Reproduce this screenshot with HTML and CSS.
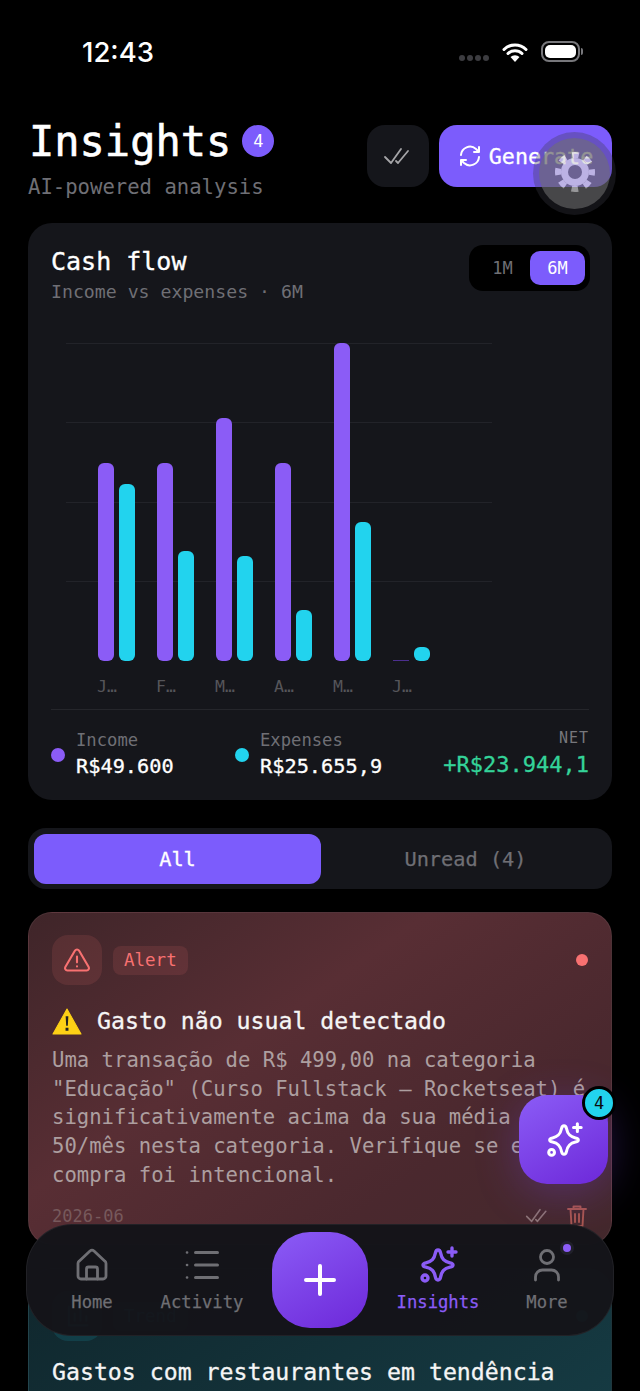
FILE: index.html
```html
<!DOCTYPE html>
<html lang="pt">
<head>
<meta charset="utf-8">
<title>Insights</title>
<link rel="stylesheet" href="styles.css">
</head>
<body>
<div class="app">
  <div class="status">
    <span class="time">12:43</span>
    <div class="status-right">
      <span class="cell"><i></i><i></i><i></i><i></i></span>
      <svg class="wifi" width="26" height="20" viewBox="0 0 26 20"><path d="M2 7.500a15.500 15.500 0 0 1 22 0M6 11.500a10 10 0 0 1 14 0" fill="none" stroke="#fff" stroke-width="3" stroke-linecap="round"/><path d="M13 20 8.500 15a6.500 6.500 0 0 1 9 0z" fill="#fff"/></svg>
      <span class="battery"><span class="battery-fill"></span></span>
    </div>
  </div>

  <main class="content">
    <header class="head">
      <div class="head-left">
        <div class="title-row"><h1>Insights</h1><span class="count">4</span></div>
        <p class="sub">AI-powered analysis</p>
      </div>
      <div class="head-actions">
        <button class="icon-btn">
          <svg width="30" height="20" viewBox="0 0 30 20" fill="none" stroke="#a5a5a8" stroke-width="1.800" stroke-linecap="round" stroke-linejoin="round"><path d="M2 11l6 6 10-14M13 15l2 2 10-12"/></svg>
        </button>
        <button class="gen-btn">
          <svg width="24" height="24" viewBox="0 0 24 24" fill="none" stroke="#fff" stroke-width="2" stroke-linecap="round" stroke-linejoin="round"><path d="M3 11a9 9 0 0 1 15-6l3 3M21 3v5h-5M21 13a9 9 0 0 1-15 6l-3-3M3 21v-5h5"/></svg>
          <span>Generate</span>
        </button>
      </div>
    </header>

    <section class="card flow">
      <div class="flow-head">
        <div>
          <h2>Cash flow</h2>
          <p class="flow-sub">Income vs expenses · 6M</p>
        </div>
        <div class="range"><span class="range-item">1M</span><span class="range-item on">6M</span></div>
      </div>
      <div class="chart">
        <div class="grid"><i></i><i></i><i></i><i></i></div>
        <div class="bars">
          <div class="group"><div class="pair"><b class="bar inc h198"></b><b class="bar exp h177"></b></div><span>J…</span></div>
          <div class="group"><div class="pair"><b class="bar inc h198"></b><b class="bar exp h110"></b></div><span>F…</span></div>
          <div class="group"><div class="pair"><b class="bar inc h243"></b><b class="bar exp h105"></b></div><span>M…</span></div>
          <div class="group"><div class="pair"><b class="bar inc h198"></b><b class="bar exp h51"></b></div><span>A…</span></div>
          <div class="group"><div class="pair"><b class="bar inc h318"></b><b class="bar exp h139"></b></div><span>M…</span></div>
          <div class="group"><div class="pair"><b class="bar zero"></b><b class="bar exp h14"></b></div><span>J…</span></div>
        </div>
      </div>
      <div class="legend">
        <div class="leg leg-inc"><span class="dot dot-inc"></span><div><p class="leg-label">Income</p><p class="leg-val">R$49.600</p></div></div>
        <div class="leg leg-exp"><span class="dot dot-exp"></span><div><p class="leg-label">Expenses</p><p class="leg-val">R$25.655,9</p></div></div>
        <div class="net"><p class="net-label">NET</p><p class="net-val">+R$23.944,1</p></div>
      </div>
    </section>

    <div class="tabs">
      <button class="tab on">All</button>
      <button class="tab">Unread (4)</button>
    </div>

    <article class="card insight alert">
      <div class="ins-top">
        <span class="ins-icon">
          <svg width="28" height="28" viewBox="0 0 24 24" fill="none" stroke="#f87171" stroke-width="1.800" stroke-linecap="round" stroke-linejoin="round"><path d="M10.300 3.900 2 18a2 2 0 0 0 1.700 3h16.600a2 2 0 0 0 1.700-3L13.700 3.900a2 2 0 0 0-3.400 0zM12 9v5M12 17.500v.1"/></svg>
        </span>
        <span class="tag">Alert</span>
        <span class="unread"></span>
      </div>
      <h3><svg class="warn" width="30" height="27" viewBox="0 0 28 26"><path d="M14 1 27.500 25H.5z" fill="#fdd116" stroke="#fdd116" stroke-width="1" stroke-linejoin="round"/><path d="M12.700 8h2.600l-.5 9h-1.600zM12.600 19h2.800v3h-2.800z" fill="#222"/></svg>Gasto não usual detectado</h3>
      <p class="ins-body">Uma transação de R$ 499,00 na categoria<br>"Educação" (Curso Fullstack — Rocketseat) é<br>significativamente acima da sua média de R$<br>50/mês nesta categoria. Verifique se essa<br>compra foi intencional.</p>
      <div class="ins-foot">
        <span class="date">2026-06</span>
        <span class="foot-icons">
          <svg class="foot-check" width="25" height="17" viewBox="0 0 30 20" fill="none" stroke="#8d7476" stroke-width="1.900" stroke-linecap="round" stroke-linejoin="round"><path d="M2 11l6 6 10-14M13 15l2 2 10-12"/></svg>
          <svg class="foot-trash" width="22" height="24" viewBox="0 0 22 24" fill="none" stroke="#a8564f" stroke-width="1.900" stroke-linecap="round" stroke-linejoin="round"><path d="M2 5h18M7.500 5V2.500h7V5M4.500 5l1 17h11l1-17M9 10v8M13 10v8"/></svg>
        </span>
      </div>
    </article>

    <article class="card insight trend">
      <div class="ins-top">
        <span class="ins-icon trend-icon">
          <svg width="28" height="28" viewBox="0 0 24 24" fill="none" stroke="#22d3ee" stroke-width="1.800" stroke-linecap="round"><path d="M5 4v16h16M10 16v-6M15 16V7M20 16v-4"/></svg>
        </span>
        <span class="tag tag-trend">Trend</span>
        <span class="unread unread-trend"></span>
      </div>
      <h3 class="trend-title">Gastos com restaurantes em tendência</h3>
    </article>
  </main>

  <div class="gear">
    <div class="gear-disc">
      <svg width="42" height="42" viewBox="0 0 42 42" fill="none"><circle cx="21" cy="21" r="17" stroke="#fff" stroke-width="6" stroke-dasharray="6.700 6.650" stroke-dashoffset="3.350"/><circle cx="21" cy="21" r="14" fill="#fff"/><circle cx="21" cy="21" r="7" fill="#707070"/></svg>
    </div>
  </div>

  <div class="fab">
    <svg width="42" height="42" viewBox="-2 -2 44 44" fill="none" stroke="#fff" stroke-width="3.200" stroke-linecap="round" stroke-linejoin="round"><path d="M20 5c1.500 0 2.200 1 2.600 3 1.200 6 3.500 8.500 9.400 9.800 2 .4 3 1 3 2.200s-1 1.800-3 2.200c-5.900 1.300-8.200 3.800-9.400 9.800-.4 2-1.100 3-2.600 3s-2.200-1-2.600-3c-1.200-6-3.500-8.500-9.400-9.800-2-.4-3-1-3-2.200s1-1.800 3-2.200c5.900-1.300 8.200-3.800 9.400-9.800.4-2 1.100-3 2.600-3zM34 3v8M30 7h8"/><circle cx="7" cy="33" r="3"/></svg>
    <span class="fab-badge">4</span>
  </div>

  <nav class="nav">
    <a class="nav-item n-home">
      <svg width="36" height="36" viewBox="0 0 36 36" fill="none" stroke="#6f6f74" stroke-width="2.800" stroke-linecap="round" stroke-linejoin="round"><path d="M4 16.500a3 3 0 0 1 1.100-2.300L16 4a3 3 0 0 1 4 0l10.900 10.200a3 3 0 0 1 1.100 2.300V29a3 3 0 0 1-3 3H7a3 3 0 0 1-3-3z"/><path d="M12.500 32V22a2 2 0 0 1 2-2h7a2 2 0 0 1 2 2v10"/></svg>
      <span>Home</span>
    </a>
    <a class="nav-item n-act">
      <svg width="36" height="36" viewBox="0 0 36 36" fill="none" stroke="#6f6f74" stroke-width="3" stroke-linecap="round"><path d="M11.500 5.500h22M11.500 18h22M11.500 30.500h22"/><path d="M3 5.500h.1M3 18h.1M3 30.500h.1" stroke-width="2.600"/></svg>
      <span>Activity</span>
    </a>
    <button class="add" aria-label="Add">
      <svg width="32" height="32" viewBox="0 0 32 32" stroke="#fff" stroke-width="4" stroke-linecap="round"><path d="M16 2v28M2 16h28"/></svg>
    </button>
    <a class="nav-item n-ins on">
      <svg class="star" width="44" height="44" viewBox="-2 -2 44 44" fill="none" stroke="#8b5cf6" stroke-width="3.400" stroke-linecap="round" stroke-linejoin="round"><path d="M20 5c1.500 0 2.200 1 2.600 3 1.200 6 3.500 8.500 9.400 9.800 2 .4 3 1 3 2.200s-1 1.800-3 2.200c-5.900 1.300-8.200 3.800-9.400 9.800-.4 2-1.100 3-2.600 3s-2.200-1-2.600-3c-1.200-6-3.500-8.500-9.400-9.800-2-.4-3-1-3-2.200s1-1.800 3-2.200c5.900-1.300 8.200-3.800 9.400-9.800.4-2 1.100-3 2.600-3zM34 3v8M30 7h8"/><circle cx="7" cy="33" r="3"/></svg>
      <span>Insights</span>
    </a>
    <a class="nav-item n-more">
      <svg width="36" height="36" viewBox="0 0 36 36" fill="none" stroke="#6f6f74" stroke-width="2.800" stroke-linecap="round"><circle cx="18" cy="10" r="6.500"/><path d="M6.500 33v-3a7 7 0 0 1 7-7h9a7 7 0 0 1 7 7v3"/></svg>
      <span>More</span>
      <i class="more-dot"></i>
    </a>
  </nav>
</div>
</body>
</html>
```

FILE: styles.css
```css
* { box-sizing: border-box; margin: 0; padding: 0; }
html, body { width: 640px; height: 1391px; overflow: hidden; background: #000; }
body { font-family: "DejaVu Sans Mono", "Liberation Mono", monospace; color: #fff; }
button { font: inherit; color: inherit; border: 0; background: none; }
h1, h2, h3 { font-weight: 500; }
i, b { display: block; font-style: normal; }

.app { position: relative; width: 640px; height: 1391px; overflow: hidden; background: #000; }

.status { height: 100px; padding: 36px 60px 0 82px; display: flex; justify-content: space-between; align-items: flex-start; }
.time { font-family: Inter, "Noto Sans", sans-serif; font-weight: 500; font-size: 27.500px; line-height: 32px; }
.status-right { display: flex; align-items: center; gap: 13px; padding-top: 5px; }
.cell { display: flex; gap: 2px; margin-top: 12px; }
.cell i { width: 6px; height: 6px; border-radius: 50%; background: #3c3c40; }
.wifi { display: block; }
.battery { width: 39px; height: 21px; border: 2px solid #77777b; border-radius: 8px; padding: 2px; position: relative; }
.battery::after { content: ""; position: absolute; right: -5px; top: 5px; width: 2px; height: 7px; background: #77777b; border-radius: 0 2px 2px 0; }
.battery-fill { display: block; width: 100%; height: 100%; background: #fff; border-radius: 5px; }

.content { padding: 0 28px; display: flex; flex-direction: column; }

.head { display: flex; justify-content: space-between; height: 123px; flex: none; }
.title-row { display: flex; align-items: center; gap: 11px; height: 34px; margin-top: 25px; padding-left: 1px; }
h1 { font-size: 42px; line-height: 34px; -webkit-text-stroke: .6px #fff; }
.count { width: 32px; height: 32px; margin-top: -2px; border-radius: 50%; background: #7c5cfc; font-size: 17px; line-height: 32px; text-align: center; }
.sub { margin-top: 15px; font-size: 20.600px; line-height: 26px; color: #6f6f75; }
.head-actions { display: flex; gap: 10px; margin-top: 25px; height: 62px; }
.icon-btn { width: 62px; height: 62px; background: #15161b; border-radius: 18px; display: flex; align-items: center; justify-content: center; }
.gen-btn { width: 173px; height: 62px; background: #7c5cfc; border-radius: 18px; display: flex; align-items: center; justify-content: center; gap: 7px; font-size: 21.700px; font-weight: 500; -webkit-text-stroke: .3px #fff; }

.card { border-radius: 24px; }
.flow { height: 577px; flex: none; background: #15161b; padding: 23px; margin-bottom: 28px; display: flex; flex-direction: column; }
.flow-head { display: flex; justify-content: space-between; align-items: flex-start; height: 73px; flex: none; }
h2 { font-size: 25px; line-height: 32px; -webkit-text-stroke: .35px #fff; }
.flow-sub { font-size: 18.200px; line-height: 28px; color: #6f6f75; margin-top: 0; }
.range { width: 121px; height: 46px; background: #000; border-radius: 14px; padding: 6px 5px 6px 6px; display: flex; margin: -1px -1px 0 0; }
.range-item { flex: 1; font-size: 17px; line-height: 34px; text-align: center; color: #6f6f75; border-radius: 10px; }
.range-item.on { flex: none; width: 55px; background: #7c5cfc; color: #fff; }

.chart { position: relative; height: 390px; flex: none; }
.grid { position: absolute; left: 15px; top: 24px; width: 426px; height: 239px; display: flex; flex-direction: column; justify-content: space-between; }
.grid i { height: 1px; background: #222329; }
.bars { position: absolute; left: 47px; top: 0; display: flex; gap: 23px; }
.group { width: 36px; display: flex; flex-direction: column; align-items: flex-start; }
.pair { height: 342px; display: flex; gap: 5px; align-items: flex-end; }
.bar { width: 16px; border-radius: 6px; }
.inc { background: #8b5cf6; }
.exp { background: #22d3ee; }
.zero { height: 1px; background: #4c2f8f; border-radius: 0; }
.h198 { height: 198px; } .h177 { height: 177px; } .h110 { height: 110px; } .h243 { height: 243px; }
.h105 { height: 105px; } .h51 { height: 51px; } .h318 { height: 318px; } .h139 { height: 139px; } .h14 { height: 14px; }
.group span { margin: 16px 0 0 -1px; font-size: 16.500px; line-height: 20px; color: #55555a; white-space: nowrap; }

.legend { border-top: 1px solid #25262b; padding-top: 18px; display: flex; position: relative; flex: none; }
.leg { display: flex; align-items: center; gap: 11px; }
.leg-inc { width: 184px; }
.leg-exp { width: 183px; }
.dot { width: 14px; height: 14px; border-radius: 50%; }
.dot-inc { background: #8b5cf6; }
.dot-exp { background: #22d3ee; }
.leg-label { font-size: 17.200px; line-height: 22px; color: #6f6f75; }
.leg-val { font-size: 20.300px; line-height: 30px; font-weight: 500; -webkit-text-stroke: .3px #fff; }
.net { margin-left: auto; text-align: right; }
.net-label { font-size: 15px; line-height: 20px; color: #77777c; letter-spacing: 1px; }
.net-val { font-size: 22px; line-height: 34px; color: #34d399; font-weight: 500; -webkit-text-stroke: .3px #34d399; }

.tabs { height: 61px; flex: none; background: #15161b; border-radius: 18px; padding: 6px; display: flex; margin-bottom: 23px; }
.tab { flex: 1; height: 50px; font-size: 20.300px; color: #6f6f75; border-radius: 12px; font-weight: 500; -webkit-text-stroke: .25px #6f6f75; }
.tab.on { flex: none; width: 287px; background: #7c5cfc; color: #fff; -webkit-text-stroke: .3px #fff; }
.tab:last-child { padding-left: 4px; }

.insight { border: 1px solid rgba(255,255,255,.06); padding: 22px 23px; flex: none; }
.alert { height: 333px; margin-bottom: 23px; background: linear-gradient(145deg, #3f2529 0%, #582e34 38%, #4a282e 72%, #43282c 100%); }
.trend { height: 300px; background: linear-gradient(145deg, #10272d 0%, #174049 100%); }
.ins-top { display: flex; align-items: center; height: 50px; gap: 11px; }
.ins-icon { width: 50px; height: 50px; border-radius: 16px; background: rgba(248,113,113,.12); display: flex; align-items: center; justify-content: center; }
.trend-icon { background: rgba(34,211,238,.12); }
.tag { padding: 0 11px; height: 29px; border-radius: 8px; font-size: 17.500px; line-height: 29px; color: #f87171; background: rgba(248,113,113,.12); }
.tag-trend { color: #22d3ee; background: rgba(34,211,238,.12); }
.unread { width: 12px; height: 12px; border-radius: 50%; background: #f87171; margin-left: auto; }
.unread-trend { background: #22d3ee; }
h3 { margin-top: 20px; font-size: 23.200px; line-height: 32px; color: #f5f5f5; white-space: nowrap; display: flex; align-items: center; gap: 15px; -webkit-text-stroke: .3px #f5f5f5; }
h3.trend-title { margin-top: 15px; }
.warn { flex: none; }
.ins-body { margin-top: 9px; font-size: 20.600px; line-height: 28.700px; color: #ad9fa0; white-space: nowrap; }
.ins-foot { display: flex; justify-content: space-between; align-items: center; margin-top: 13px; height: 26px; }
.date { font-size: 17px; color: #77595c; }
.foot-icons { display: flex; align-items: center; gap: 16px; }
.foot-check, .foot-trash { flex: none; display: block; }

.gear { position: absolute; left: 533px; top: 132px; width: 83px; height: 83px; padding: 6px; border-radius: 50%; background: rgba(60,60,70,.32); }
.gear-disc { width: 71px; height: 71px; border-radius: 50%; background: #707070; opacity: .56; display: flex; align-items: center; justify-content: center; padding-bottom: 3px; }

.fab { position: absolute; left: 519px; top: 1095px; width: 89px; height: 89px; border-radius: 28px; background: linear-gradient(150deg, #8b5cf6, #6d28d9); box-shadow: 0 8px 44px rgba(124,70,240,.3); display: flex; align-items: center; justify-content: center; }
.fab-badge { position: absolute; right: -8px; top: -9px; width: 34px; height: 34px; border-radius: 50%; background: #22d3ee; border: 3px solid #000; color: #0b0b0f; font-size: 17px; font-weight: 500; line-height: 28px; text-align: center; }

.nav { position: absolute; left: 26px; top: 1224px; width: 588px; height: 112px; border-radius: 46px; background: rgba(20,20,25,.985); border: 1px solid rgba(255,255,255,.06); }
.nav-item { position: absolute; top: 22px; display: flex; flex-direction: column; align-items: center; font-size: 17.200px; line-height: 22px; color: #6f6f74; font-weight: 500; -webkit-text-stroke: .25px #6f6f74; }
.nav-item svg { display: block; margin-bottom: 8px; }
.nav-item .star { margin: -4px 0 4px; }
.n-home { left: 38px; width: 54px; }
.n-act { left: 130px; width: 90px; }
.n-ins { left: 366px; width: 90px; }
.n-more { left: 492px; width: 56px; }
.nav-item.on { color: #8b5cf6; -webkit-text-stroke-color: #8b5cf6; }
.add { position: absolute; left: 245px; top: 7px; width: 96px; height: 96px; border-radius: 38px; background: linear-gradient(150deg, #8b5cf6, #6d28d9); display: flex; align-items: center; justify-content: center; }
.more-dot { position: absolute; right: 1px; top: -6px; width: 8px; height: 8px; border-radius: 50%; background: #8b5cf6; border: 3px solid #20202a; box-sizing: content-box; }
```
